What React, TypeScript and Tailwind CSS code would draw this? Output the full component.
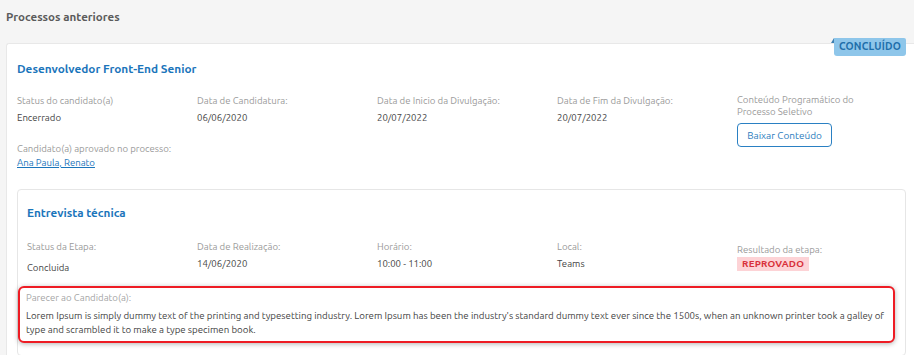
import React from 'react';

const font = "font-['Ubuntu','Open_Sans',sans-serif]";

function Field({ label, value }: { label: string; value: React.ReactNode }) {
  return (
    <div className="flex flex-col">
      <span className="text-[9.6px] leading-[13px] text-[#9a9a9a]">{label}</span>
      <span className="mt-[4px] text-[9.6px] leading-[13px] text-[#444]">{value}</span>
    </div>
  );
}

export default function App() {
  return (
    <div className={`min-h-screen bg-[#f5f5f5] pt-[9px] ${font}`}>
      <h2 className="h-[34px] px-[6px] text-[11.6px] leading-[16px] font-bold text-[#5b5b5b]">Processos anteriores</h2>

      <div className="relative ml-[6px] rounded-tl-[3px] border-t border-l border-[#e8e8e8] bg-white pl-[10px] pr-[8px] pt-[16px] pb-[20px]">
        {/* status ribbon */}
        <div className="absolute right-[8px] top-[-6px]">
          <span className="absolute left-[-3px] top-0 h-0 w-0 border-b-[5px] border-l-[3px] border-b-[#3d7fb0] border-l-transparent" />
          <div className="flex h-[18px] w-[72px] items-center justify-center rounded-b-[3px] rounded-tr-[2px] bg-[#8ec6ea] text-[10.3px] font-bold tracking-[0.2px] text-[#1e6fab]">
            CONCLUÍDO
          </div>
        </div>

        <h3 className="text-[11.8px] leading-[18px] font-bold text-[#1b75bb]">Desenvolvedor Front-End Senior</h3>

        <div className="mt-[16px] grid grid-cols-[180px_180px_180px_180px_1fr]">
          <Field label="Status do candidato(a)" value="Encerrado" />
          <Field label="Data de Candidatura:" value="06/06/2020" />
          <Field label="Data de Inicio da Divulgação:" value="20/07/2022" />
          <Field label="Data de Fim da Divulgação:" value="20/07/2022" />
          <div className="flex flex-col">
            <span className="text-[9.6px] leading-[12px] text-[#9a9a9a]">
              Conteúdo Programático do
              <br />
              Processo Seletivo
            </span>
            <button className="mt-[5px] h-[24px] w-[95px] rounded-[4px] border-[1.5px] border-[#2a80c3] bg-white text-[10px] text-[#2a7bbd]">
              Baixar Conteúdo
            </button>
          </div>
        </div>

        <div className="mt-[-5px] flex flex-col">
          <span className="text-[9.6px] leading-[13px] text-[#9a9a9a]">Candidato(a) aprovado no processo:</span>
          <a href="#" className="mt-[1px] w-fit text-[9.6px] leading-[13px] text-[#1b75bb] underline">
            Ana Paula, Renato
          </a>
        </div>

        <div className="mt-[20px] rounded-[4px] border border-[#e6e6e6] bg-white px-[9px] pt-[14px] pb-[12px]">
          <h3 className="text-[11.7px] leading-[18px] font-bold text-[#1b75bb]">Entrevista técnica</h3>

          <div className="mt-[18px] grid grid-cols-[170px_180px_180px_180px_1fr]">
            <div className="flex flex-col">
              <span className="text-[9.6px] leading-[13px] text-[#9a9a9a]">Status da Etapa:</span>
              <span className="mt-[8px] text-[9.6px] leading-[13px] text-[#444]">Concluida</span>
            </div>
            <Field label="Data de Realização:" value="14/06/2020" />
            <Field label="Horário:" value="10:00 - 11:00" />
            <Field label="Local:" value="Teams" />
            <div className="flex flex-col pt-[3px]">
              <span className="text-[9.6px] leading-[13px] text-[#9a9a9a]">Resultado da etapa:</span>
              <span className="mt-[1px] w-fit bg-[#fdd3d6] px-[5px] text-[9.8px] leading-[14px] font-bold tracking-[0.2px] text-[#d8303a]">
                REPROVADO
              </span>
            </div>
          </div>

          <div className="-ml-[9px] mt-[12px] w-[877px] rounded-[6px] border-2 border-[#ee1c24] bg-white px-[6px] pt-[3px] pb-[4px] shadow-[0_1px_5px_rgba(0,0,0,0.3)]">
            <span className="block text-[9.6px] leading-[13px] text-[#a5a5a5]">Parecer ao Candidato(a):</span>
            <p className="mt-[5px] text-[9.7px] leading-[14px] text-[#444]">
              Lorem Ipsum is simply dummy text of the printing and typesetting industry. Lorem Ipsum has been the industry's standard dummy text ever since the 1500s, when an unknown printer took a galley of type and scrambled it to make a type specimen book.
            </p>
          </div>
        </div>
      </div>
    </div>
  );
}
